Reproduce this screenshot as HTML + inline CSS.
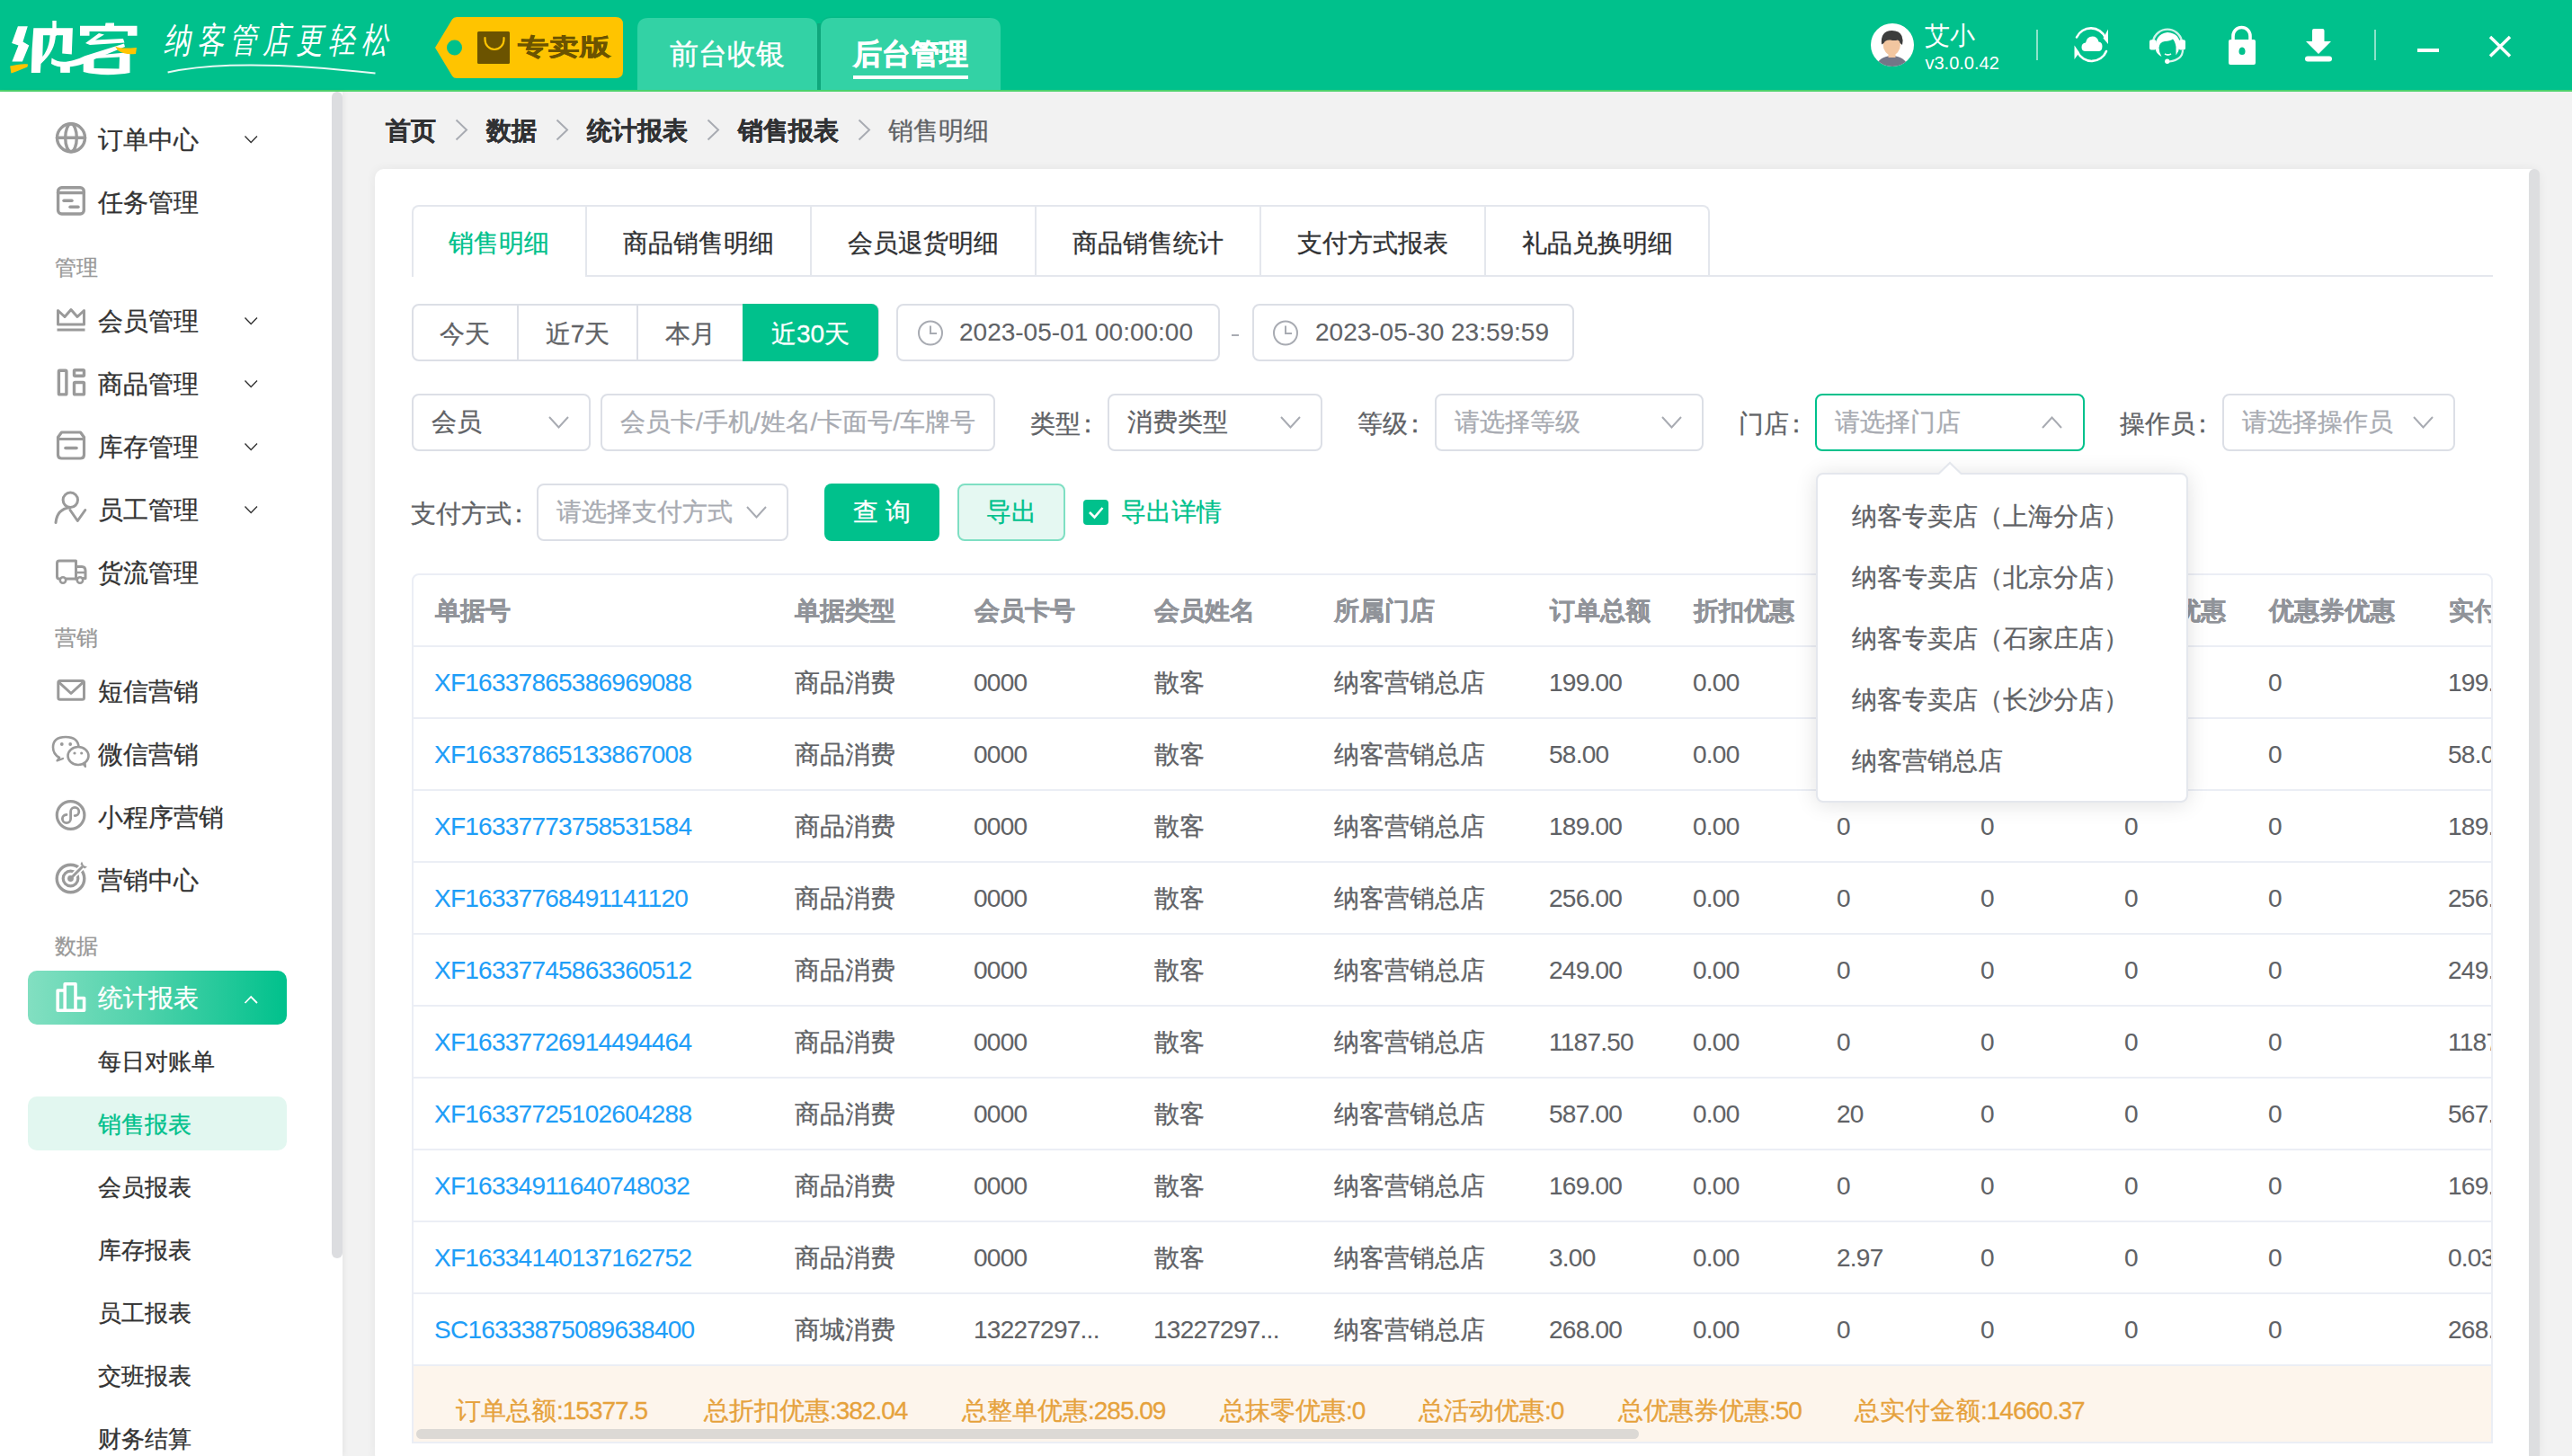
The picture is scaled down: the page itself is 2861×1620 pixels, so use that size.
<!DOCTYPE html>
<html><head><meta charset="utf-8">
<style>
*{box-sizing:border-box;margin:0;padding:0}
html,body{width:2861px;height:1620px;overflow:hidden;background:#f2f2f2;font-family:"Liberation Sans",sans-serif;-webkit-text-stroke:0.3px currentColor}
.abs{position:absolute}
.hdr{position:absolute;left:0;top:0;width:2861px;height:100px;background:#00c18c}
.hline{position:absolute;left:0;top:100px;width:2861px;height:2px;background:#4cd26c}
.side{position:absolute;left:0;top:102px;width:381px;height:1518px;background:#fff;box-shadow:2px 0 6px rgba(0,0,0,0.05)}
.sthumb{position:absolute;left:369px;top:102px;width:12px;height:1298px;background:#dcdde0;border-radius:6px 6px 6px 6px}
.mi{position:absolute;left:31px;width:288px;height:60px;border-radius:10px}
.mi .t{position:absolute;left:78px;top:0;line-height:62px;font-size:28px;color:#333;white-space:nowrap}
.mi .ic{position:absolute;left:30px;top:13px;width:36px;height:34px}
.mi .ch{position:absolute;left:240px;top:25px;width:16px;height:10px}
.sub .t{font-size:26px}
.lbl{position:absolute;left:61px;font-size:24px;color:#999;line-height:30px}
.card{position:absolute;left:417px;top:188px;width:2408px;height:1440px;background:#fff;border-radius:10px;box-shadow:0 0 12px rgba(0,0,0,0.06)}
.cthumb{position:absolute;left:2813px;top:188px;width:12px;height:1432px;background:#dddee0;border-radius:6px 6px 0 0}
.bc{position:absolute;top:126px;font-size:28px;line-height:40px;white-space:nowrap}
.bcb{font-weight:bold;color:#303133}
.sel{position:absolute;height:64px;border:2px solid #dcdfe6;border-radius:8px;background:#fff}
.sel .t{position:absolute;left:20px;top:0;line-height:60px;font-size:28px;color:#a8abb2;white-space:nowrap}
.sel .ch{position:absolute;top:24px;width:20px;height:12px}
.tab{position:absolute;top:229px;height:78px;line-height:84px;text-align:center;font-size:28px;color:#303133;white-space:nowrap}
.qb{position:absolute;top:338px;height:64px;line-height:68px;text-align:center;font-size:28px;color:#606266;white-space:nowrap}
.tbl{position:absolute;left:458px;top:638px;width:2315px;height:968px;border:2px solid #ebeef5;border-radius:8px 8px 0 0;overflow:hidden;font-size:28px}
.th{position:absolute;top:0;line-height:80px;font-weight:bold;color:#909399;white-space:nowrap}
.td{position:absolute;line-height:80px;color:#606266;white-space:nowrap}
.td.n{font-size:28px;letter-spacing:-0.75px;margin-left:-0.5px;-webkit-text-stroke:0.1px currentColor}
.td.lk{color:#1e9ef8}
.rl{position:absolute;left:0;width:2315px;height:2px;background:#ebeef5}
.sum{position:absolute;left:0;top:880px;width:2315px;height:84px;background:#fdf5ec}
.st{position:absolute;top:900px;line-height:60px;color:#e6a23c;white-space:nowrap}
.hthumb{position:absolute;left:3px;top:950px;width:1360px;height:11px;border-radius:6px;background:#dcd9d5}
.pi{position:absolute;left:2060px;height:68px;line-height:68px;font-size:28px;color:#606266;white-space:nowrap}
.sn{letter-spacing:-1px}
.flbl{position:absolute;font-size:28px;color:#606266;line-height:40px;white-space:nowrap}
</style></head><body>
<!-- HEADER -->
<div class="hdr"></div>
<div class="hline"></div>
<svg class="abs" style="left:0;top:0" width="1130" height="100" viewBox="0 0 1130 100">
  <!-- logo 纳 -->
  <g fill="#fff">
    <polygon points="19.9,29.3 30.8,29.3 25.5,46.5 32.3,50.4 24.9,68.5 13.4,68.5 20.5,50.5 13.1,47.9"/>
    <path d="M37.3,31.2 L80.9,31.2 L79.8,60.5 L69.2,59.5 L70,39.2 L62,39.2 C61,52 57,60 45.5,71 L44.8,80.9 L34.8,80.9 L35.6,55 Z M48,39.2 L47.3,63 C53,56 55,48 55.6,39.2 Z"/>
    <rect x="58.3" y="23" width="4.4" height="17"/>
    <rect x="67.2" y="73.5" width="10.6" height="7.4"/>
    <path d="M57.5,64.5 C66,71 78,70 95,62 L138,48.5 L139,52 L105,66 C90,73 70,79 57,71 Z"/>
    <!-- 客 -->
    <path d="M89,28.7 L117,28.7 L117.5,25.5 L127,25.5 L127,28.7 L152.5,28.7 L152.5,39.8 L142,39.8 L142,35 L99.5,35 L99.5,39.8 L89,39.8 Z"/>
    <path d="M95,48 L110,37 L116,38.5 L106,44.5 L137,43 L138.5,47.5 L100,50 Z"/>
    <path d="M92.7,63 L144.5,58 L144.5,81 C128,84 108,84 92.7,80 Z M104.5,65 L104.5,76 L132.5,76.5 L133,63.5 Z" fill-rule="evenodd"/>
  </g>
  <g fill="#ffc400">
    <path d="M11.2,73.5 C18,72 26,70.5 31.1,71.6 L30.5,74.5 C24,77 17,80 12.4,81.5 Z"/>
    <path d="M128,51.5 C134,54 140,54 152,53 L151,60 C143,61 137,60 131,56 Z"/>
  </g>
  <!-- slogan -->
  <text x="182" y="58" font-size="30" fill="#fff" letter-spacing="6.5" style="font-style:italic;-webkit-text-stroke:0" transform="translate(0,58) scale(1,1.3) translate(0,-58)">纳客管店更轻松</text>
  <path d="M186.6,80.5 C230,71 300,68 417.5,81.6" stroke="#fff" stroke-width="2" fill="none" opacity="0.9"/>
  <!-- badge -->
  <path d="M484,53 L503,21.5 Q504.5,19 508,19 L685,19 Q693,19 693,27 L693,79 Q693,87 685,87 L508,87 Q504.5,87 503,84.5 Z" fill="#ffc400"/>
  <circle cx="505.5" cy="53" r="8.5" fill="#00c18c"/>
  <rect x="531" y="35" width="36" height="36" rx="1.5" fill="#6b5300"/>
  <path d="M539.5,42 L539.5,44 A10.5,11 0 0 0 560.5,44 L560.5,42" stroke="#ffc400" stroke-width="2.2" fill="none" stroke-linecap="round"/>
  <text x="576" y="61" font-size="26" font-weight="bold" fill="#6b5300" stroke="#6b5300" stroke-width="0.5" textLength="103" lengthAdjust="spacingAndGlyphs">专卖版</text>
  <!-- tabs -->
  <path d="M709,100 L709,32 Q709,20 721,20 L897,20 Q909,20 909,32 L909,100 Z" fill="#33d2a5"/>
  
  <rect x="909" y="26" width="4" height="74" fill="#0fa77c"/>
  <path d="M913,32 Q913,19.5 925,19.5 L1101,19.5" fill="none" stroke="#04b685" stroke-width="2" opacity="0.7"/>
  <path d="M913,100 L913,32 Q913,20 925,20 L1101,20 Q1113,20 1113,32 L1113,100 Z" fill="#33d2a5"/>
  <text x="809" y="70.5" font-size="32" fill="#fff" stroke="#fff" stroke-width="0.4" text-anchor="middle">前台收银</text>
  <text x="1013" y="70.5" font-size="32" font-weight="bold" fill="#fff" stroke="#fff" stroke-width="0.7" text-anchor="middle">后台管理</text>
  <rect x="949" y="84" width="128" height="4" fill="#fff"/>
</svg>
<svg class="abs" style="left:2060px;top:0" width="801" height="100" viewBox="2060 0 801 100">
  <!-- avatar -->
  <circle cx="2105" cy="50" r="24" fill="#fff"/>
  <clipPath id="avc"><circle cx="2105" cy="50" r="24"/></clipPath>
  <g clip-path="url(#avc)">
    <path d="M2085,80 Q2087,62.5 2104.5,62 Q2122,62.5 2124,80 Z" fill="#737687"/>
    <rect x="2100.5" y="57" width="8" height="7" fill="#f2c6a0"/>
    <ellipse cx="2104.3" cy="50" rx="9.6" ry="11.3" fill="#f2c6a0"/>
    <path d="M2093,49.5 Q2091.5,34 2104.5,34 Q2113,34 2115.5,40 Q2117.5,45 2116,50 L2113.5,48 Q2113.5,45.5 2111,44.5 Q2107,45.5 2103,44.5 Q2097,44 2095.5,48 Z" fill="#3d3d3d"/>
  </g>
  <text x="2141" y="48.5" font-size="28" fill="#fff">艾小</text>
  <text x="2141.5" y="77" font-size="20" fill="#fff">v3.0.0.42</text>
  <rect x="2265" y="33" width="2" height="34" fill="#fff" opacity="0.55"/>
  <rect x="2641" y="33" width="2" height="34" fill="#fff" opacity="0.55"/>
  <!-- sync cloud -->
  <g fill="none" stroke="#fff" stroke-width="2.6" stroke-linecap="round">
    <path d="M2310,41.5 A17.5,17.5 0 0 1 2342,42"/>
    <path d="M2343,57 A17.5,17.5 0 0 1 2311,58"/>
  </g>
  <path d="M2345,32.5 L2345,49 L2339.5,42.5 Z" fill="#fff"/>
  <path d="M2307.5,50.5 L2307.5,66 L2313,58.5 Z" fill="#fff"/>
  <path d="M2320,57 Q2315.5,57 2315.5,52.5 Q2315.5,48 2320,47.5 Q2321.5,40.6 2327.5,40.6 Q2333,40.6 2334.5,46.5 Q2338.5,47 2338.5,51.5 Q2338.5,57 2334,57 Z" fill="#fff"/>
  <!-- headset -->
  <path d="M2395,45.5 A16.5,17 0 0 1 2427,45.5" fill="none" stroke="#fff" stroke-width="2.4" opacity="0.8"/>
  <rect x="2391" y="44.3" width="7.5" height="11.2" rx="2" fill="#fff"/>
  <rect x="2423.5" y="44.3" width="7.5" height="11.2" rx="2" fill="#fff"/>
  <path d="M2398,56 Q2396,38 2411,36 Q2426,37 2424.5,52 Q2423.5,58 2420.5,61.5 L2420.5,52 Q2419.5,46 2417,43.5 Q2414,45.5 2408,46 Q2402,47 2401.5,53 Q2401.5,58 2404.5,63 Q2399,60 2398,56 Z" fill="#fff"/>
  <path d="M2408,60 Q2411.5,62 2415,60" fill="none" stroke="#fff" stroke-width="1.8" opacity="0.9"/>
  <path d="M2428,55.5 Q2428,66.5 2413,68.5" fill="none" stroke="#fff" stroke-width="2.2" opacity="0.85"/>
  <circle cx="2410.8" cy="68.3" r="2.7" fill="#fff"/>
  <!-- lock -->
  <path d="M2484,46 L2484,40 A9.5,9.5 0 0 1 2503,40 L2503,46" stroke="#fff" stroke-width="3.6" fill="none"/>
  <path d="M2481,44 L2507,44 Q2509,44 2509,46 L2509,70 Q2509,72 2507,72 L2481,72 Q2479,72 2479,70 L2479,46 Q2479,44 2481,44 Z M2494,52.5 A3.3,3.3 0 1 0 2494.01,52.5 Z" fill="#fff" fill-rule="evenodd"/>
  <circle cx="2494" cy="57.5" r="3.5" fill="#00c18c"/>
  <!-- download -->
  <path d="M2572,34 Q2572,32 2574,32 L2583.5,32 Q2585.5,32 2585.5,34 L2585.5,46 L2593,46 L2579,60 L2565,46 L2572,46 Z" fill="#fff"/>
  <rect x="2564" y="62.5" width="30" height="6" rx="3" fill="#fff"/>
  <!-- minimize/close -->
  <rect x="2689" y="54" width="24" height="4" fill="#fff"/>
  <path d="M2770,41 L2792,62.5 M2792,41 L2770,62.5" stroke="#fff" stroke-width="3.4"/>
</svg>

<!-- SIDEBAR -->
<div class="side"></div>
<div class="sthumb"></div>
<div class="abs" style="left:0;top:0;width:380px;height:1620px">
  <div class="mi" style="top:125px"><span class="t">订单中心</span></div>
  <div class="mi" style="top:195px"><span class="t">任务管理</span></div>
  <div class="lbl" style="top:283px">管理</div>
  <div class="mi" style="top:327px"><span class="t">会员管理</span></div>
  <div class="mi" style="top:397px"><span class="t">商品管理</span></div>
  <div class="mi" style="top:467px"><span class="t">库存管理</span></div>
  <div class="mi" style="top:537px"><span class="t">员工管理</span></div>
  <div class="mi" style="top:607px"><span class="t">货流管理</span></div>
  <div class="lbl" style="top:695px">营销</div>
  <div class="mi" style="top:739px"><span class="t">短信营销</span></div>
  <div class="mi" style="top:809px"><span class="t">微信营销</span></div>
  <div class="mi" style="top:879px"><span class="t">小程序营销</span></div>
  <div class="mi" style="top:949px"><span class="t">营销中心</span></div>
  <div class="lbl" style="top:1038px">数据</div>
  <div class="mi" style="top:1080px;background:linear-gradient(90deg,#82dfc1 0%,#4fd2ab 45%,#00c18c 100%)"><span class="t" style="color:#fff">统计报表</span></div>
  <div class="mi sub" style="top:1150px"><span class="t">每日对账单</span></div>
  <div class="mi sub" style="top:1220px;background:#e2f7f0"><span class="t" style="color:#00c18c">销售报表</span></div>
  <div class="mi sub" style="top:1290px"><span class="t">会员报表</span></div>
  <div class="mi sub" style="top:1360px"><span class="t">库存报表</span></div>
  <div class="mi sub" style="top:1430px"><span class="t">员工报表</span></div>
  <div class="mi sub" style="top:1500px"><span class="t">交班报表</span></div>
  <div class="mi sub" style="top:1570px"><span class="t">财务结算</span></div>
</div>
<svg class="abs" style="left:0;top:100px" width="380" height="1100" viewBox="0 100 380 1100">
  <g fill="none" stroke="#9a9a9a" stroke-width="3.4" stroke-linejoin="round" stroke-linecap="round">
    <!-- globe -->
    <circle cx="79" cy="153.3" r="15.5"/>
    <ellipse cx="79" cy="153.3" rx="6.3" ry="15.5"/>
    <line x1="63.5" y1="153.3" x2="94.5" y2="153.3"/>
    <!-- task -->
    <rect x="64.6" y="208.7" width="28.7" height="29.3" rx="4"/>
    <line x1="64.6" y1="214.5" x2="93.3" y2="214.5"/>
    <line x1="71" y1="223.3" x2="80" y2="223.3"/>
    <line x1="78" y1="230.3" x2="87" y2="230.3"/>
    <!-- crown -->
    <path d="M64.5,345.5 L64.5,361 L93.5,361 L93.5,345.5 L86,352.5 L79,344.5 L72,352.5 Z" stroke-width="3"/>
    <line x1="63.5" y1="367" x2="94.5" y2="367" stroke-width="3" stroke-linecap="butt"/>
    <!-- goods -->
    <rect x="65.4" y="412.3" width="8.5" height="26.6" rx="1"/>
    <rect x="82.5" y="411.8" width="11" height="6.5" rx="1"/>
    <rect x="82.5" y="425.5" width="11" height="13.4" rx="1"/>
    <!-- stock -->
    <path d="M64.5,488.5 L64.5,486.5 L68.5,481 L89.5,481 L93.5,486.5 L93.5,488.5 Z" stroke-width="3.2"/>
    <path d="M64.5,489 L64.5,506 Q64.5,510 68.5,510 L89.5,510 Q93.5,510 93.5,506 L93.5,489" stroke-width="3.2"/>
    <line x1="73" y1="498.5" x2="85" y2="498.5" stroke-width="3.6"/>
    <!-- staff -->
    <circle cx="78.3" cy="556.3" r="8.2" stroke-width="3"/>
    <path d="M62,581.5 Q63.5,566.5 77.5,564.8" stroke-width="3"/>
    <path d="M78,567.5 L86.3,579.5 L94.8,567.5" stroke-width="3"/>
    <!-- truck -->
    <path d="M66,644 Q63.5,644 63.5,641.5 L63.5,626.5 Q63.5,624 66,624 L84.5,624 L84.5,644" stroke-width="3"/>
    <path d="M84.5,630.5 L91,630.5 Q95,630.5 95,635 L95,643.5 L92.5,643.5" stroke-width="3"/>
    <line x1="85" y1="637" x2="94" y2="637" stroke-width="2.4"/>
    <line x1="73.5" y1="644" x2="85.5" y2="644" stroke-width="3"/>
    <circle cx="70" cy="645.5" r="3.2" stroke-width="2.6"/>
    <circle cx="89" cy="645.5" r="3.2" stroke-width="2.6"/>
    <!-- mail -->
    <rect x="64.8" y="757.5" width="28.7" height="20.8" rx="2" stroke-width="3"/>
    <path d="M66,759.5 L79,771.5 L92,759.5" stroke-width="3"/>
    <!-- wechat -->
    <path d="M66,843 Q59,839 59,831.5 Q59,820 73,820 Q87,820 87.5,831.5" stroke-width="2.6"/>
    <path d="M66,843 L63.5,846.5 L70,844" stroke-width="2.2"/>
    <ellipse cx="87" cy="841" rx="11.5" ry="10" fill="#fff" stroke-width="2.6"/>
    <path d="M93,850.5 L95,853 L94.5,848.5" stroke-width="2.2"/>
    <circle cx="68.8" cy="828" r="1.9" fill="#9a9a9a" stroke="none"/>
    <circle cx="78.2" cy="828" r="1.9" fill="#9a9a9a" stroke="none"/>
    <circle cx="83" cy="838" r="1.6" fill="#9a9a9a" stroke="none"/>
    <circle cx="90.7" cy="838" r="1.6" fill="#9a9a9a" stroke="none"/>
    <!-- mini program -->
    <circle cx="78.6" cy="907" r="15.3" stroke-width="3.2"/>
    <path d="M74,906.5 A4.6,4.6 0 1 0 78.6,911.1 L78.6,903 A4.6,4.6 0 1 1 83.2,907.6" stroke-width="2.8"/>
    <!-- target -->
    <circle cx="78.5" cy="977.5" r="15.3" stroke-width="3.4"/>
    <circle cx="78.5" cy="977.5" r="8.3" stroke-width="3.2"/>
  </g>
  <path d="M79,977 L92,964" stroke="#fff" stroke-width="6.5"/>
  <circle cx="78.5" cy="977.5" r="3.4" fill="#9a9a9a"/>
  <path d="M78.5,977.5 L92,964" stroke="#9a9a9a" stroke-width="3"/>
  <path d="M89.5,961.5 L91,958.5 L93,963 L97,964.5 L94,966.5 Z" fill="#9a9a9a"/>
  <!-- chart white -->
  <path d="M64.2,1124.2 L64.2,1102 L72.2,1102 L72.2,1094.8 L84,1094.8 L84,1110.5 L93.6,1110.5 L93.6,1124.2 Z M72.2,1102 L72.2,1124.2 M84,1110.5 L84,1124.2" fill="none" stroke="#fff" stroke-width="3.6" stroke-linejoin="round"/>
  <!-- chevrons -->
  <g fill="none" stroke="#333" stroke-width="1.4">
    <path d="M272.5,151.5 L279.2,158.5 L286,151.5"/>
    <path d="M272.5,353.5 L279.2,360.5 L286,353.5"/>
    <path d="M272.5,423.5 L279.2,430.5 L286,423.5"/>
    <path d="M272.5,493.5 L279.2,500.5 L286,493.5"/>
    <path d="M272.5,563.5 L279.2,570.5 L286,563.5"/>
  </g>
  <path d="M272.5,1116 L279.2,1109 L286,1116" fill="none" stroke="#fff" stroke-width="1.8"/>
</svg>

<!-- MAIN -->
<div class="card"></div>
<div class="cthumb"></div>
<!-- breadcrumb -->
<div class="bc bcb" style="left:429px">首页</div>
<div class="bc bcb" style="left:541px">数据</div>
<div class="bc bcb" style="left:653px">统计报表</div>
<div class="bc bcb" style="left:821px">销售报表</div>
<div class="bc" style="left:988px;color:#606266">销售明细</div>
<svg class="abs" style="left:500px;top:125px" width="480" height="40" viewBox="500 125 480 40">
  <g fill="none" stroke="#a8abb2" stroke-width="2">
    <path d="M507.5,133.5 L519,144.5 L507.5,155.5"/>
    <path d="M619.5,133.5 L631,144.5 L619.5,155.5"/>
    <path d="M787.5,133.5 L799,144.5 L787.5,155.5"/>
    <path d="M955.5,133.5 L967,144.5 L955.5,155.5"/>
  </g>
</svg>
<!-- tabs -->
<div class="abs" style="left:458px;top:306px;width:2315px;height:2px;background:#e4e7ed"></div>
<div class="abs" style="left:458px;top:228px;width:1444px;height:80px;border:2px solid #e4e7ed;border-bottom:none;border-radius:8px 8px 0 0"></div>
<div class="abs" style="left:460px;top:306px;width:191px;height:2px;background:#fff"></div>
<div class="abs" style="left:651px;top:228px;width:2px;height:80px;background:#e4e7ed"></div>
<div class="abs" style="left:901px;top:228px;width:2px;height:80px;background:#e4e7ed"></div>
<div class="abs" style="left:1151px;top:228px;width:2px;height:80px;background:#e4e7ed"></div>
<div class="abs" style="left:1401px;top:228px;width:2px;height:80px;background:#e4e7ed"></div>
<div class="abs" style="left:1651px;top:228px;width:2px;height:80px;background:#e4e7ed"></div>
<div class="tab" style="left:458px;width:194px;color:#00c18c">销售明细</div>
<div class="tab" style="left:652px;width:250px">商品销售明细</div>
<div class="tab" style="left:902px;width:250px">会员退货明细</div>
<div class="tab" style="left:1152px;width:250px">商品销售统计</div>
<div class="tab" style="left:1402px;width:250px">支付方式报表</div>
<div class="tab" style="left:1652px;width:250px">礼品兑换明细</div>
<!-- quick date -->
<div class="abs" style="left:458px;top:338px;width:520px;height:64px;border:2px solid #dcdfe6;border-radius:8px"></div>
<div class="abs" style="left:575px;top:338px;width:2px;height:64px;background:#dcdfe6"></div>
<div class="abs" style="left:708px;top:338px;width:2px;height:64px;background:#dcdfe6"></div>
<div class="abs" style="left:826px;top:338px;width:151px;height:64px;background:#00c18c;border-radius:0 8px 8px 0"></div>
<div class="qb" style="left:458px;width:118px">今天</div>
<div class="qb" style="left:576px;width:133px">近7天</div>
<div class="qb" style="left:709px;width:117px">本月</div>
<div class="qb" style="left:826px;width:151px;color:#fff">近30天</div>
<!-- date pickers -->
<div class="sel" style="left:997px;top:338px;width:360px;height:64px"><span class="t" style="left:68px;line-height:60px;color:#606266;-webkit-text-stroke:0.1px currentColor">2023-05-01 00:00:00</span></div>
<div class="abs" style="left:1370px;top:372px;width:8px;height:2px;background:#a8abb2"></div>
<div class="sel" style="left:1393px;top:338px;width:358px;height:64px"><span class="t" style="left:68px;line-height:60px;color:#606266;-webkit-text-stroke:0.1px currentColor">2023-05-30 23:59:59</span></div>
<svg class="abs" style="left:1000px;top:340px" width="800" height="60" viewBox="1000 340 800 60">
  <g fill="none" stroke="#a8abb2" stroke-width="2">
    <circle cx="1035" cy="370.5" r="13"/>
    <path d="M1035,362.5 L1035,371 L1042,371"/>
    <circle cx="1430" cy="370.5" r="13"/>
    <path d="M1430,362.5 L1430,371 L1437,371"/>
  </g>
</svg>
<!-- filter row 1 -->
<div class="sel" style="left:458px;top:438px;width:199px"><span class="t" style="color:#606266">会员</span></div>
<div class="sel" style="left:668px;top:438px;width:439px"><span class="t">会员卡/手机/姓名/卡面号/车牌号</span></div>
<div class="flbl" style="left:1146px;top:452px">类型<span style="margin-left:-6px">：</span></div>
<div class="sel" style="left:1232px;top:438px;width:239px"><span class="t" style="color:#606266">消费类型</span></div>
<div class="flbl" style="left:1510px;top:452px">等级<span style="margin-left:-6px">：</span></div>
<div class="sel" style="left:1596px;top:438px;width:299px"><span class="t">请选择等级</span></div>
<div class="flbl" style="left:1934px;top:452px">门店<span style="margin-left:-6px">：</span></div>
<div class="sel" style="left:2019px;top:438px;width:300px;border-color:#00c18c"><span class="t">请选择门店</span></div>
<div class="flbl" style="left:2358px;top:452px">操作员<span style="margin-left:-6px">：</span></div>
<div class="sel" style="left:2472px;top:438px;width:259px"><span class="t">请选择操作员</span></div>
<!-- filter row 2 -->
<div class="flbl" style="left:457px;top:552px">支付方式<span style="margin-left:-6px">：</span></div>
<div class="sel" style="left:597px;top:538px;width:280px"><span class="t">请选择支付方式</span></div>
<div class="abs" style="left:917px;top:538px;width:128px;height:64px;background:#00c18c;border-radius:8px;color:#fff;font-size:28px;line-height:64px;text-align:center;white-space:pre">查 询</div>
<div class="abs" style="left:1065px;top:538px;width:120px;height:64px;background:#e5f8f2;border:2px solid #7fdfc3;border-radius:8px;color:#00c18c;font-size:28px;line-height:60px;text-align:center">导出</div>
<div class="abs" style="left:1205px;top:556px;width:28px;height:28px;background:#00c18c;border-radius:4px"></div>
<div class="flbl" style="left:1247px;top:550px;color:#00c18c">导出详情</div>
<svg class="abs" style="left:600px;top:440px" width="2150" height="160" viewBox="600 440 2150 160">
  <g fill="none" stroke="#a8abb2" stroke-width="2">
    <path d="M611,464 L621.5,475.5 L632,464"/>
    <path d="M1425,464 L1435.5,475.5 L1446,464"/>
    <path d="M1849,464 L1859.5,475.5 L1870,464"/>
    <path d="M2272,476 L2282.5,464.5 L2293,476"/>
    <path d="M2685,464 L2695.5,475.5 L2706,464"/>
    <path d="M831,564 L841.5,575.5 L852,564"/>
  </g>
  <path d="M1212,570 L1217.5,575.5 L1226.5,565" fill="none" stroke="#fff" stroke-width="2.6"/>
</svg>

<!-- TABLE -->
<div class="tbl">
<div class="th" style="left:23.5px">单据号</div>
<div class="th" style="left:423.5px">单据类型</div>
<div class="th" style="left:623.5px">会员卡号</div>
<div class="th" style="left:823.5px">会员姓名</div>
<div class="th" style="left:1023.5px">所属门店</div>
<div class="th" style="left:1263.5px">订单总额</div>
<div class="th" style="left:1423.5px">折扣优惠</div>
<div class="th" style="left:1583.5px">整单优惠</div>
<div class="th" style="left:1743.5px">抹零优惠</div>
<div class="th" style="left:1903.5px">活动优惠</div>
<div class="th" style="left:2063.5px">优惠券优惠</div>
<div class="th" style="left:2263.5px">实付金额</div>
<div class="rl" style="top:78px"></div>
<div class="td lk n" style="left:23.5px;top:80px">XF16337865386969088</div>
<div class="td" style="left:423.5px;top:80px">商品消费</div>
<div class="td n" style="left:623.5px;top:80px">0000</div>
<div class="td" style="left:823.5px;top:80px">散客</div>
<div class="td" style="left:1023.5px;top:80px">纳客营销总店</div>
<div class="td n" style="left:1263.5px;top:80px">199.00</div>
<div class="td n" style="left:1423.5px;top:80px">0.00</div>
<div class="td n" style="left:1583.5px;top:80px">0</div>
<div class="td n" style="left:1743.5px;top:80px">0</div>
<div class="td n" style="left:1903.5px;top:80px">0</div>
<div class="td n" style="left:2063.5px;top:80px">0</div>
<div class="td n" style="left:2263.5px;top:80px">199.00</div>
<div class="rl" style="top:158px"></div>
<div class="td lk n" style="left:23.5px;top:160px">XF16337865133867008</div>
<div class="td" style="left:423.5px;top:160px">商品消费</div>
<div class="td n" style="left:623.5px;top:160px">0000</div>
<div class="td" style="left:823.5px;top:160px">散客</div>
<div class="td" style="left:1023.5px;top:160px">纳客营销总店</div>
<div class="td n" style="left:1263.5px;top:160px">58.00</div>
<div class="td n" style="left:1423.5px;top:160px">0.00</div>
<div class="td n" style="left:1583.5px;top:160px">0</div>
<div class="td n" style="left:1743.5px;top:160px">0</div>
<div class="td n" style="left:1903.5px;top:160px">0</div>
<div class="td n" style="left:2063.5px;top:160px">0</div>
<div class="td n" style="left:2263.5px;top:160px">58.00</div>
<div class="rl" style="top:238px"></div>
<div class="td lk n" style="left:23.5px;top:240px">XF16337773758531584</div>
<div class="td" style="left:423.5px;top:240px">商品消费</div>
<div class="td n" style="left:623.5px;top:240px">0000</div>
<div class="td" style="left:823.5px;top:240px">散客</div>
<div class="td" style="left:1023.5px;top:240px">纳客营销总店</div>
<div class="td n" style="left:1263.5px;top:240px">189.00</div>
<div class="td n" style="left:1423.5px;top:240px">0.00</div>
<div class="td n" style="left:1583.5px;top:240px">0</div>
<div class="td n" style="left:1743.5px;top:240px">0</div>
<div class="td n" style="left:1903.5px;top:240px">0</div>
<div class="td n" style="left:2063.5px;top:240px">0</div>
<div class="td n" style="left:2263.5px;top:240px">189.00</div>
<div class="rl" style="top:318px"></div>
<div class="td lk n" style="left:23.5px;top:320px">XF16337768491141120</div>
<div class="td" style="left:423.5px;top:320px">商品消费</div>
<div class="td n" style="left:623.5px;top:320px">0000</div>
<div class="td" style="left:823.5px;top:320px">散客</div>
<div class="td" style="left:1023.5px;top:320px">纳客营销总店</div>
<div class="td n" style="left:1263.5px;top:320px">256.00</div>
<div class="td n" style="left:1423.5px;top:320px">0.00</div>
<div class="td n" style="left:1583.5px;top:320px">0</div>
<div class="td n" style="left:1743.5px;top:320px">0</div>
<div class="td n" style="left:1903.5px;top:320px">0</div>
<div class="td n" style="left:2063.5px;top:320px">0</div>
<div class="td n" style="left:2263.5px;top:320px">256.00</div>
<div class="rl" style="top:398px"></div>
<div class="td lk n" style="left:23.5px;top:400px">XF16337745863360512</div>
<div class="td" style="left:423.5px;top:400px">商品消费</div>
<div class="td n" style="left:623.5px;top:400px">0000</div>
<div class="td" style="left:823.5px;top:400px">散客</div>
<div class="td" style="left:1023.5px;top:400px">纳客营销总店</div>
<div class="td n" style="left:1263.5px;top:400px">249.00</div>
<div class="td n" style="left:1423.5px;top:400px">0.00</div>
<div class="td n" style="left:1583.5px;top:400px">0</div>
<div class="td n" style="left:1743.5px;top:400px">0</div>
<div class="td n" style="left:1903.5px;top:400px">0</div>
<div class="td n" style="left:2063.5px;top:400px">0</div>
<div class="td n" style="left:2263.5px;top:400px">249.00</div>
<div class="rl" style="top:478px"></div>
<div class="td lk n" style="left:23.5px;top:480px">XF16337726914494464</div>
<div class="td" style="left:423.5px;top:480px">商品消费</div>
<div class="td n" style="left:623.5px;top:480px">0000</div>
<div class="td" style="left:823.5px;top:480px">散客</div>
<div class="td" style="left:1023.5px;top:480px">纳客营销总店</div>
<div class="td n" style="left:1263.5px;top:480px">1187.50</div>
<div class="td n" style="left:1423.5px;top:480px">0.00</div>
<div class="td n" style="left:1583.5px;top:480px">0</div>
<div class="td n" style="left:1743.5px;top:480px">0</div>
<div class="td n" style="left:1903.5px;top:480px">0</div>
<div class="td n" style="left:2063.5px;top:480px">0</div>
<div class="td n" style="left:2263.5px;top:480px">1187.50</div>
<div class="rl" style="top:558px"></div>
<div class="td lk n" style="left:23.5px;top:560px">XF16337725102604288</div>
<div class="td" style="left:423.5px;top:560px">商品消费</div>
<div class="td n" style="left:623.5px;top:560px">0000</div>
<div class="td" style="left:823.5px;top:560px">散客</div>
<div class="td" style="left:1023.5px;top:560px">纳客营销总店</div>
<div class="td n" style="left:1263.5px;top:560px">587.00</div>
<div class="td n" style="left:1423.5px;top:560px">0.00</div>
<div class="td n" style="left:1583.5px;top:560px">20</div>
<div class="td n" style="left:1743.5px;top:560px">0</div>
<div class="td n" style="left:1903.5px;top:560px">0</div>
<div class="td n" style="left:2063.5px;top:560px">0</div>
<div class="td n" style="left:2263.5px;top:560px">567.00</div>
<div class="rl" style="top:638px"></div>
<div class="td lk n" style="left:23.5px;top:640px">XF16334911640748032</div>
<div class="td" style="left:423.5px;top:640px">商品消费</div>
<div class="td n" style="left:623.5px;top:640px">0000</div>
<div class="td" style="left:823.5px;top:640px">散客</div>
<div class="td" style="left:1023.5px;top:640px">纳客营销总店</div>
<div class="td n" style="left:1263.5px;top:640px">169.00</div>
<div class="td n" style="left:1423.5px;top:640px">0.00</div>
<div class="td n" style="left:1583.5px;top:640px">0</div>
<div class="td n" style="left:1743.5px;top:640px">0</div>
<div class="td n" style="left:1903.5px;top:640px">0</div>
<div class="td n" style="left:2063.5px;top:640px">0</div>
<div class="td n" style="left:2263.5px;top:640px">169.00</div>
<div class="rl" style="top:718px"></div>
<div class="td lk n" style="left:23.5px;top:720px">XF16334140137162752</div>
<div class="td" style="left:423.5px;top:720px">商品消费</div>
<div class="td n" style="left:623.5px;top:720px">0000</div>
<div class="td" style="left:823.5px;top:720px">散客</div>
<div class="td" style="left:1023.5px;top:720px">纳客营销总店</div>
<div class="td n" style="left:1263.5px;top:720px">3.00</div>
<div class="td n" style="left:1423.5px;top:720px">0.00</div>
<div class="td n" style="left:1583.5px;top:720px">2.97</div>
<div class="td n" style="left:1743.5px;top:720px">0</div>
<div class="td n" style="left:1903.5px;top:720px">0</div>
<div class="td n" style="left:2063.5px;top:720px">0</div>
<div class="td n" style="left:2263.5px;top:720px">0.03</div>
<div class="rl" style="top:798px"></div>
<div class="td lk n" style="left:23.5px;top:800px">SC16333875089638400</div>
<div class="td" style="left:423.5px;top:800px">商城消费</div>
<div class="td n" style="left:623.5px;top:800px">13227297...</div>
<div class="td n" style="left:823.5px;top:800px">13227297...</div>
<div class="td" style="left:1023.5px;top:800px">纳客营销总店</div>
<div class="td n" style="left:1263.5px;top:800px">268.00</div>
<div class="td n" style="left:1423.5px;top:800px">0.00</div>
<div class="td n" style="left:1583.5px;top:800px">0</div>
<div class="td n" style="left:1743.5px;top:800px">0</div>
<div class="td n" style="left:1903.5px;top:800px">0</div>
<div class="td n" style="left:2063.5px;top:800px">0</div>
<div class="td n" style="left:2263.5px;top:800px">268.00</div>
<div class="rl" style="top:878px"></div>
<div class="sum"></div>
<div class="st" style="left:47px">订单总额<span class="sn">:15377.5</span></div>
<div class="st" style="left:323px">总折扣优惠<span class="sn">:382.04</span></div>
<div class="st" style="left:610px">总整单优惠<span class="sn">:285.09</span></div>
<div class="st" style="left:897px">总抹零优惠<span class="sn">:0</span></div>
<div class="st" style="left:1118px">总活动优惠<span class="sn">:0</span></div>
<div class="st" style="left:1340px">总优惠券优惠<span class="sn">:50</span></div>
<div class="st" style="left:1603px">总实付金额<span class="sn">:14660.37</span></div>
<div class="hthumb"></div>
</div>
<!-- POPPER -->
<div class="abs" style="left:2020px;top:526px;width:414px;height:367px;background:#fff;border:2px solid #e4e7ed;border-radius:8px;box-shadow:0 2px 24px rgba(0,0,0,0.12)"></div>
<svg class="abs" style="left:2150px;top:512px" width="40" height="20" viewBox="2150 512 40 20">
  <path d="M2156,528 L2169,515 L2182,528 Z" fill="#fff"/>
  <path d="M2156,527.5 L2169,515 L2182,527.5" fill="none" stroke="#e4e7ed" stroke-width="2"/>
  <rect x="2150" y="528" width="40" height="4" fill="#fff"/>
</svg>
<div class="pi" style="top:541px">纳客专卖店（上海分店）</div>
<div class="pi" style="top:609px">纳客专卖店（北京分店）</div>
<div class="pi" style="top:677px">纳客专卖店（石家庄店）</div>
<div class="pi" style="top:745px">纳客专卖店（长沙分店）</div>
<div class="pi" style="top:813px">纳客营销总店</div>
</body></html>
